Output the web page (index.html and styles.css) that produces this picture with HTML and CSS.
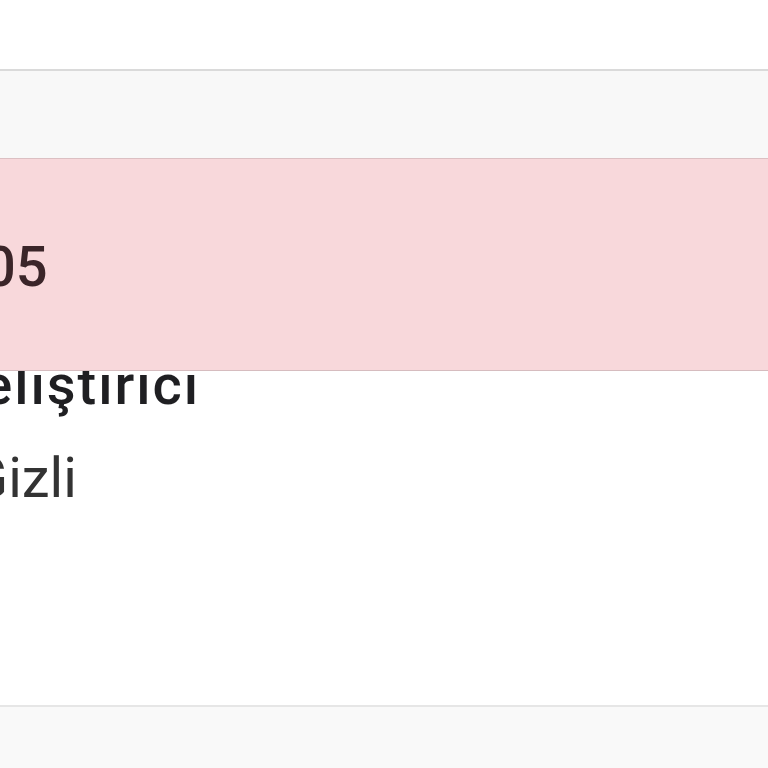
FILE: index.html
```html
<!DOCTYPE html>
<html lang="tr">
<head>
    <meta charset="UTF-8">
    <meta name="viewport" content="width=device-width, initial-scale=1.0">
    <title>Kullanıcılar</title>
    <link rel="stylesheet" href="styles.css">
</head>
<body>
    <!-- Table (zoomed) -->
    <div class="table">
        <div class="row row-top"></div>
        <div class="row row-head"></div>
        <div class="row row-danger">
            <span class="cell-date">05</span>
        </div>
        <div class="row row-body">
            <div class="role">Geliştirici</div>
            <div class="status">Gizli</div>
        </div>
        <div class="row row-foot"></div>
    </div>
</body>
</html>
```

FILE: styles.css
```css
/* General Styles */
* {
    margin: 0;
    padding: 0;
    box-sizing: border-box;
}

html, body {
    height: 100%;
    overflow: hidden;
}

body {
    font-family: Roboto, "Noto Sans", Arial, sans-serif;
    font-size: 56px;
    line-height: 1;
    background: #fff;
    color: #222;
}

.table {
    display: flex;
    flex-direction: column;
    height: 100%;
}

.row {
    white-space: nowrap;
}

.row-top {
    height: 69px;
    background: #fff;
}

.row-head {
    height: 89px;
    border-top: 2px solid #dadada;
    background: #f8f8f8;
}

.row-danger {
    position: relative;
    z-index: 1;
    height: 213px;
    padding-top: 80px;
    border-top: 1px solid #dcc0c3;
    border-bottom: 1px solid #d6bcbf;
    background: #f8d8db;
    color: #3b2529;
}

.cell-date {
    display: block;
    margin-left: -16px;
    font-weight: 500;
}

.row-body {
    height: 334px;
    background: #fff;
}

.role {
    margin-top: -14px;
    margin-left: -58px;
    letter-spacing: 2px;
    font-weight: 500;
    color: #1f1f22;
}

.status {
    margin-top: 37px;
    margin-left: -30px;
    color: #333;
}

.row-foot {
    flex: 1;
    border-top: 2px solid #e6e6e6;
    background: #f9f9f9;
}
```
